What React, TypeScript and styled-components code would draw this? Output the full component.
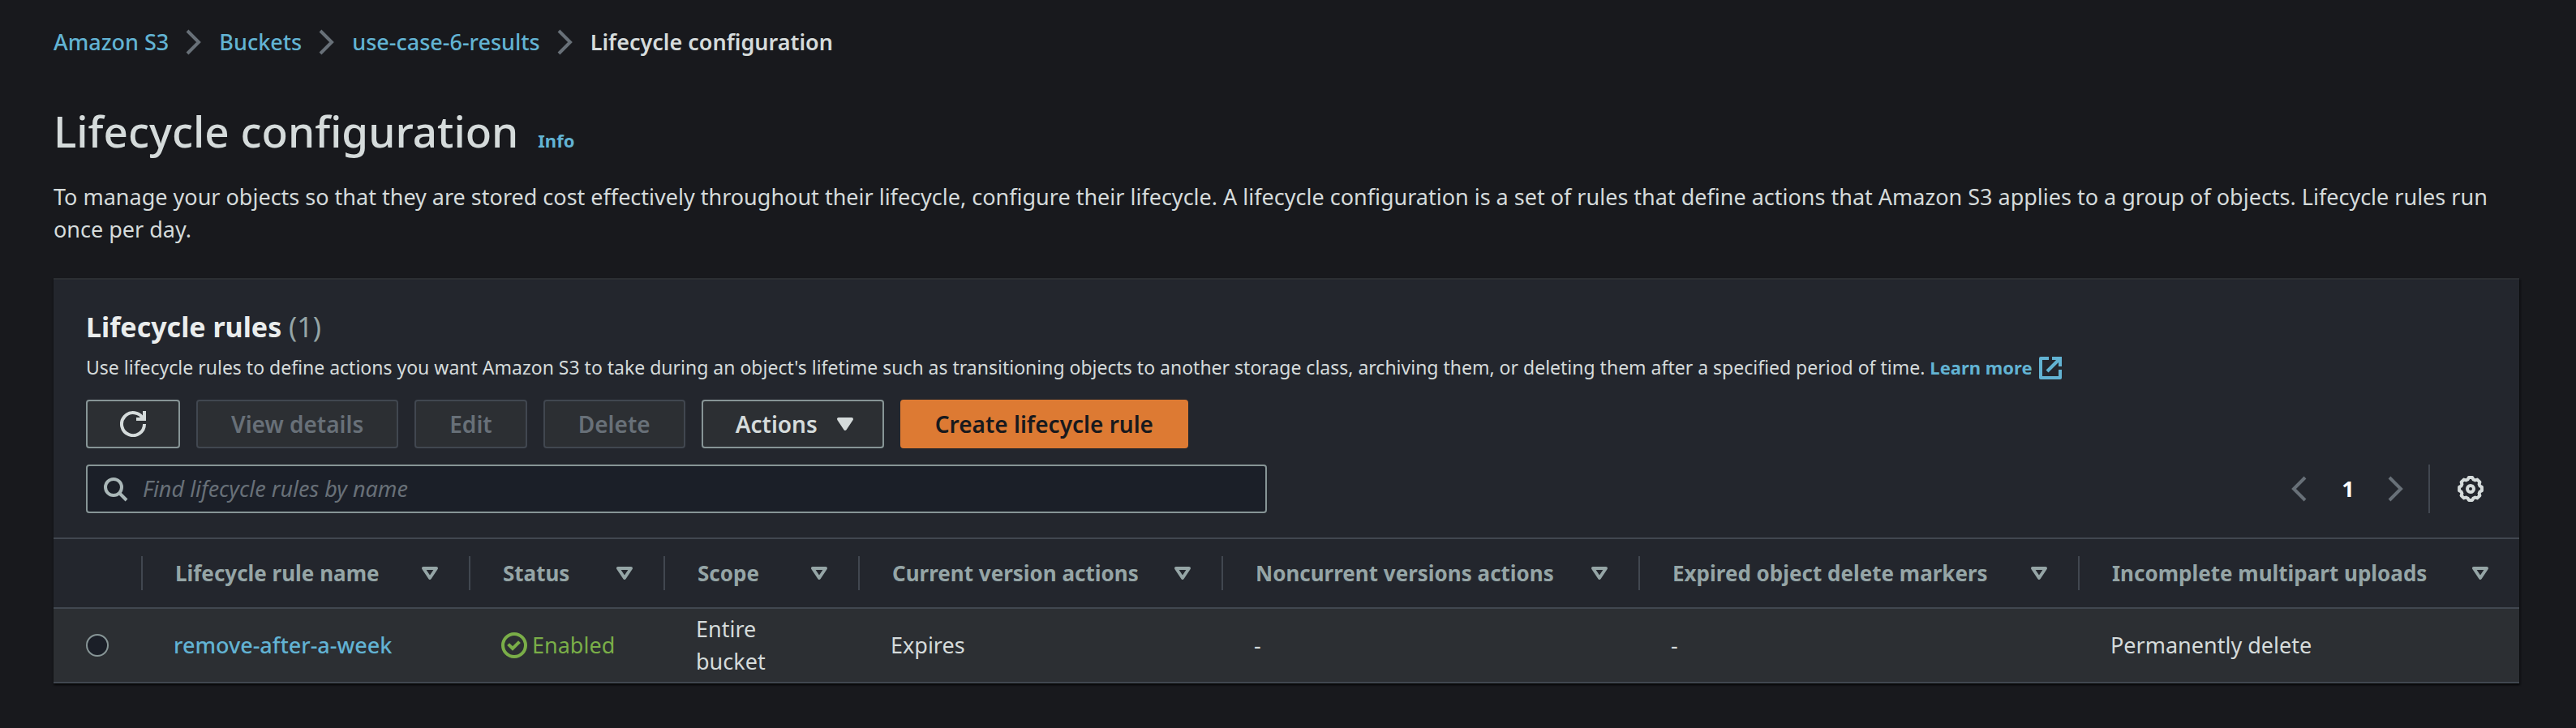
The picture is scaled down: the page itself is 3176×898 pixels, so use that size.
import React from "react";
import styled, { createGlobalStyle, css } from "styled-components";

const color = {
  page: "#18191d",
  panel: "#23262d",
  raised: "#2c2f33",
  field: "#1b1f28",
  text: "#d5dbdb",
  bright: "#eaeded",
  muted: "#95a5a6",
  disabled: "#687078",
  line: "#414750",
  control: "#879596",
  link: "#62b3d3",
  green: "#7aae48",
  orange: "#dd7a33",
};

const GlobalStyle = createGlobalStyle`
  *, *::before, *::after { box-sizing: border-box; }
  body {
    margin: 0;
    background: ${color.page};
    color: ${color.text};
    font-family: "Noto Sans", "Open Sans", sans-serif;
    font-size: 27px;
    font-weight: 400;
    line-height: 40px;
  }
  button, input { font: inherit; color: inherit; }
`;

const Page = styled.main`
  padding: 32px 70px 56px 66px;
`;

const Icon = styled.svg.attrs({ viewBox: "0 0 16 16", "aria-hidden": true })<{ $tint?: string }>`
  width: 32px;
  height: 32px;
  flex: none;
  fill: none;
  stroke: ${(p) => p.$tint ?? "currentColor"};
  stroke-width: 2;
`;

const Link = styled.a`
  color: ${color.link};
  font-weight: 500;
  text-decoration: none;
  &:hover { text-decoration: underline; }
`;

const BoldLink = styled(Link)`
  font-size: 22px;
  font-weight: 700;
`;

const Crumbs = styled.ol`
  display: flex;
  flex-wrap: wrap;
  align-items: center;
  margin: 0;
  padding: 0;
  list-style: none;
`;

const Crumb = styled.li`
  display: flex;
  align-items: center;
  gap: 15px;
  padding-right: 15px;
  &[aria-current] { font-weight: 600; }
`;

const TitleRow = styled.header`
  display: flex;
  align-items: baseline;
  gap: 24px;
  margin-top: 60px;
`;

const Title = styled.h1`
  margin: 0;
  font-size: 53px;
  font-weight: 500;
  line-height: 60px;
`;

const Intro = styled.p`
  margin: 30px 0 40px;
`;

const Panel = styled.section`
  background: ${color.panel};
  border-top: 2px solid ${color.raised};
  box-shadow: 0 2px 2px rgba(0, 0, 0, 0.6), 2px 2px 2px rgba(0, 0, 0, 0.3);
`;

const PanelHead = styled.div`
  padding: 36px 40px 30px;
`;

const PanelTitle = styled.h2`
  margin: 0;
  color: ${color.bright};
  font-size: 34px;
  font-weight: 700;
  line-height: 44px;
`;

const Count = styled.span`
  color: ${color.muted};
  font-weight: 400;
`;

const PanelText = styled.p`
  margin: 10px 0 22px;
  font-size: 23px;
  line-height: 36px;
  & ${Icon} {
    margin: -8px 0 -4px 6px;
    vertical-align: middle;
  }
`;

const ButtonRow = styled.div`
  display: flex;
  flex-wrap: wrap;
  gap: 20px;
  margin-bottom: 20px;
`;

const Button = styled.button<{ $kind?: "primary" | "menu" | "icon" }>`
  display: flex;
  align-items: center;
  gap: 18px;
  height: 60px;
  padding: 0 41px;
  border: 2px solid ${color.control};
  border-radius: 4px;
  background: ${color.raised};
  color: ${color.text};
  font-size: 28px;
  font-weight: 600;
  white-space: nowrap;
  cursor: pointer;
  &:disabled {
    border-color: ${color.line};
    color: ${color.disabled};
    cursor: default;
  }
  ${(p) => p.$kind === "menu" && css`padding: 0 30px 0 40px;`}
  ${(p) => p.$kind === "icon" && css`padding: 0 40px;`}
  ${(p) =>
    p.$kind === "primary" &&
    css`
      border-color: ${color.orange};
      background: ${color.orange};
      color: ${color.page};
    `}
`;

const FilterRow = styled.div`
  display: grid;
  grid-template-columns: 1fr 1fr;
  gap: 48px;
`;

const SearchBox = styled.label`
  display: flex;
  align-items: center;
  gap: 18px;
  height: 60px;
  padding: 0 18px;
  border: 2px solid ${color.control};
  border-radius: 4px;
  background: ${color.field};
`;

const SearchInput = styled.input`
  flex: 1;
  min-width: 0;
  padding: 0;
  border: 0;
  outline: 0;
  background: none;
  &::placeholder {
    color: ${color.disabled};
    font-style: italic;
    opacity: 1;
  }
`;

const TableTools = styled.div`
  display: flex;
  align-items: center;
  justify-content: flex-end;
  padding-right: 4px;
`;

const ToolButton = styled.button`
  display: flex;
  padding: 0;
  border: 0;
  background: none;
  cursor: pointer;
`;

const PageButton = styled(ToolButton)`
  justify-content: center;
  width: 86px;
  color: #fff;
  font-weight: 700;
`;

const Settings = styled.div`
  display: flex;
  align-items: center;
  height: 60px;
  margin-left: 24px;
  padding-left: 34px;
  border-left: 2px solid ${color.line};
`;

const TableScroll = styled.div`
  overflow-x: auto;
`;

const Table = styled.table`
  width: 100%;
  border-spacing: 0;
  border-top: 2px solid ${color.line};
`;

const HeadCell = styled.th<{ $width?: number }>`
  width: ${(p) => (p.$width ? `${p.$width}px` : "auto")};
  height: 86px;
  padding: 0;
  border-bottom: 2px solid ${color.line};
  &:last-child > * { border-right: 0; }
`;

const HeadInner = styled.div`
  height: 42px;
  border-right: 2px solid ${color.line};
`;

const SortButton = styled.button`
  display: flex;
  align-items: center;
  justify-content: space-between;
  gap: 16px;
  width: 100%;
  height: 42px;
  padding: 0 32px 0 40px;
  border: 0;
  background: none;
  color: ${color.muted};
  font-size: 26px;
  font-weight: 700;
  white-space: nowrap;
  cursor: pointer;
`;

const Cell = styled.td`
  padding: 5px 38px;
  border-bottom: 2px solid ${color.line};
  background: ${color.raised};
`;

const SelectCell = styled(Cell)`
  padding: 0 0 0 40px;
`;

const Radio = styled.input`
  display: block;
  appearance: none;
  width: 28px;
  height: 28px;
  margin: 0;
  border: 2px solid ${color.control};
  border-radius: 50%;
  background: ${color.field};
  &:checked { border: 8px solid ${color.link}; }
`;

const Status = styled.span`
  display: flex;
  align-items: center;
  gap: 6px;
  color: ${color.green};
`;

const gearOutline =
  Array.from({ length: 8 }, (_, k) =>
    [
      [-9, 7.05],
      [9, 7.05],
      [17, 6],
      [28, 6],
    ].map(([offset, radius]) => {
      const a = ((k * 45 + offset) * Math.PI) / 180;
      return `${(8 + radius * Math.cos(a)).toFixed(2)} ${(8 + radius * Math.sin(a)).toFixed(2)}`;
    })
  )
    .flat()
    .map((point, i) => (i === 0 ? `M${point}` : `L${point}`))
    .join("") + "Z";

const ChevronRight = () => (
  <Icon $tint={color.disabled}>
    <path d="m4 1 7 7-7 7" />
  </Icon>
);

const Triangle = ({ filled }: { filled?: boolean }) => (
  <Icon>
    <path d="M4 5h8l-4 6-4-6z" strokeLinejoin="round" fill={filled ? "currentColor" : "none"} />
  </Icon>
);

const columns: { label: string; width?: number }[] = [
  { label: "Lifecycle rule name", width: 404 },
  { label: "Status", width: 240 },
  { label: "Scope", width: 240 },
  { label: "Current version actions", width: 448 },
  { label: "Noncurrent versions actions", width: 514 },
  { label: "Expired object delete markers", width: 542 },
  { label: "Incomplete multipart uploads" },
];

const trail = ["Amazon S3", "Buckets", "use-case-6-results"];

export default function App() {
  return (
    <>
      <GlobalStyle />
      <Page>
        <nav aria-label="Breadcrumbs">
          <Crumbs>
            {trail.map((name) => (
              <Crumb key={name}>
                <Link href="#">{name}</Link>
                <ChevronRight />
              </Crumb>
            ))}
            <Crumb aria-current="page">Lifecycle configuration</Crumb>
          </Crumbs>
        </nav>

        <TitleRow>
          <Title>Lifecycle configuration</Title>
          <BoldLink href="#">Info</BoldLink>
        </TitleRow>
        <Intro>
          To manage your objects so that they are stored cost effectively throughout their lifecycle, configure
          their lifecycle. A lifecycle configuration is a set of rules that define actions that Amazon S3 applies
          to a group of objects. Lifecycle rules run once per day.
        </Intro>

        <Panel>
          <PanelHead>
            <PanelTitle>
              Lifecycle rules <Count>(1)</Count>
            </PanelTitle>
            <PanelText>
              Use lifecycle rules to define actions you want Amazon S3 to take during an object's lifetime such as
              transitioning objects to another storage class, archiving them, or deleting them after a specified
              period of time.{" "}
              <BoldLink href="#">
                Learn more
                <Icon>
                  <path d="M10 2h4v4" strokeLinecap="square" />
                  <path d="m6 10 8-8" />
                  <path d="M14 9.05V14H2V2h5" strokeLinejoin="round" />
                </Icon>
              </BoldLink>
            </PanelText>

            <ButtonRow>
              <Button $kind="icon" aria-label="Refresh">
                <Icon>
                  <path d="M10 5h5V0" />
                  <path d="M15 8a7 7 0 1 1-.7-3" />
                </Icon>
              </Button>
              <Button disabled>View details</Button>
              <Button disabled>Edit</Button>
              <Button disabled>Delete</Button>
              <Button $kind="menu" aria-haspopup="menu">
                Actions
                <Triangle filled />
              </Button>
              <Button $kind="primary">Create lifecycle rule</Button>
            </ButtonRow>

            <FilterRow>
              <SearchBox>
                <Icon $tint="#aab7b8">
                  <circle cx="7" cy="7" r="5" />
                  <path d="m15 15-4.5-4.5" />
                </Icon>
                <SearchInput
                  type="text"
                  aria-label="Find lifecycle rules by name"
                  placeholder="Find lifecycle rules by name"
                />
              </SearchBox>
              <TableTools>
                <ToolButton aria-label="Previous page">
                  <Icon $tint={color.disabled}>
                    <path d="m11 1-7 7 7 7" />
                  </Icon>
                </ToolButton>
                <PageButton aria-current="page">1</PageButton>
                <ToolButton aria-label="Next page">
                  <ChevronRight />
                </ToolButton>
                <Settings>
                  <ToolButton aria-label="Preferences">
                    <Icon>
                      <path d={gearOutline} strokeLinejoin="round" />
                      <circle cx="8" cy="8" r="2" />
                    </Icon>
                  </ToolButton>
                </Settings>
              </TableTools>
            </FilterRow>
          </PanelHead>

          <TableScroll>
            <Table aria-label="Lifecycle rules">
              <thead>
                <tr>
                  <HeadCell $width={110} scope="col" aria-label="Selection">
                    <HeadInner />
                  </HeadCell>
                  {columns.map(({ label, width }) => (
                    <HeadCell key={label} $width={width} scope="col">
                      <HeadInner>
                        <SortButton>
                          {label}
                          <Triangle />
                        </SortButton>
                      </HeadInner>
                    </HeadCell>
                  ))}
                </tr>
              </thead>
              <tbody>
                <tr>
                  <SelectCell>
                    <Radio type="radio" name="rule" aria-label="remove-after-a-week" />
                  </SelectCell>
                  <Cell>
                    <Link href="#">remove-after-a-week</Link>
                  </Cell>
                  <Cell>
                    <Status>
                      <Icon>
                        <circle cx="8" cy="8" r="7" />
                        <path d="m5 8 2 2 3.52-3.52" strokeLinecap="square" />
                      </Icon>
                      Enabled
                    </Status>
                  </Cell>
                  <Cell>Entire bucket</Cell>
                  <Cell>Expires</Cell>
                  <Cell>-</Cell>
                  <Cell>-</Cell>
                  <Cell>Permanently delete</Cell>
                </tr>
              </tbody>
            </Table>
          </TableScroll>
        </Panel>
      </Page>
    </>
  );
}
